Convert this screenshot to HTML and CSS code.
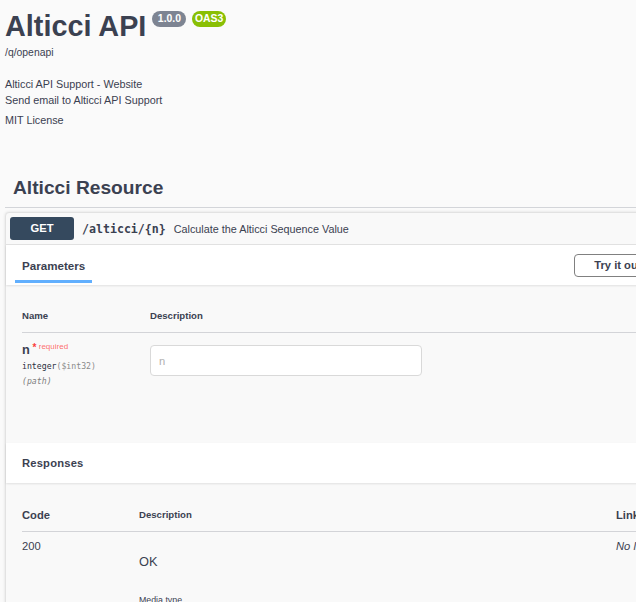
FILE: index.html
```html
<!DOCTYPE html>
<html lang="en">
<head>
<meta charset="utf-8">
<title>Alticci API</title>
<link rel="stylesheet" href="styles.css">
</head>
<body>
<div class="page">
  <div class="info">
    <h1 class="title">Alticci API <span class="badges"><span class="badge ver">1.0.0</span><span class="badge oas">OAS3</span></span></h1>
    <div class="base-url">/q/openapi</div>
    <div class="contact">
      <a class="link">Alticci API Support - Website</a>
      <a class="link">Send email to Alticci API Support</a>
    </div>
    <a class="link license">MIT License</a>
  </div>

  <h3 class="tag">Alticci Resource</h3>

  <div class="opblock">
    <div class="summary">
      <span class="method">GET</span>
      <span class="path">/alticci/{n}</span>
      <span class="summary-desc">Calculate the Alticci Sequence Value</span>
    </div>

    <div class="section-header">
      <div class="tab"><span class="tab-label">Parameters</span></div>
      <button class="try-btn">Try it out</button>
    </div>

    <div class="params">
      <table class="ptable">
        <thead>
          <tr><th class="col-name">Name</th><th class="col-desc">Description</th></tr>
        </thead>
        <tbody>
          <tr>
            <td class="col-name">
              <div class="pname">n<span class="star">&nbsp;*</span><span class="req">&nbsp;required</span></div>
              <div class="ptype">integer<span class="pformat">($int32)</span></div>
              <div class="pin">(path)</div>
            </td>
            <td class="col-desc"><input class="pinput" type="text" placeholder="n"></td>
          </tr>
        </tbody>
      </table>
    </div>

    <div class="section-header">
      <h4 class="sec-title">Responses</h4>
    </div>

    <div class="responses">
      <table class="rtable">
        <thead>
          <tr>
            <th class="rcode rhead-lg">Code</th>
            <th class="rdesc rhead-sm">Description</th>
            <th class="rlinks rhead-lg">Links</th>
          </tr>
        </thead>
        <tbody>
          <tr>
            <td class="rcode">200</td>
            <td class="rdesc">
              <p class="ok">OK</p>
              <div class="media-title">Media type</div>
              <div class="media-select">text/plain</div>
            </td>
            <td class="rlinks"><i>No links</i></td>
          </tr>
        </tbody>
      </table>
    </div>
  </div>
</div>
</body>
</html>
```

FILE: styles.css
```css
html, body {
  margin: 0;
  padding: 0;
  background: #fafafa;
  overflow: hidden;
}
body {
  font-family: "Liberation Sans", Arial, sans-serif;
  color: #3b4151;
}
.page {
  width: 700px;
  padding-left: 5px;
}

/* info */
.title {
  margin: 12px 0 0;
  font-size: 28.8px;
  line-height: 28.8px;
  font-weight: 700;
  display: flex;
  align-items: flex-start;
}
.badges {
  display: flex;
  gap: 6px;
  margin-left: 6px;
}
.badge {
  display: inline-block;
  height: 16px;
  line-height: 16px;
  border-radius: 57px;
  color: #fff;
  font-size: 10.4px;
  font-weight: 700;
  margin-top: -1px;
}
.badge.ver { background: #7d8492; padding: 0 5.5px; }
.badge.oas { background: #89bf04; padding: 0 2.5px; }
.base-url {
  margin-top: 6px;
  font-size: 10.4px;
  line-height: 12px;
}
.contact { margin-top: 17.6px; }
.link {
  display: block;
  font-size: 10.8px;
  line-height: 16px;
  color: #3b4151;
}
.license { margin-top: 4px; }

/* tag */
.tag {
  margin: 48px 0 0;
  padding: 0 0 7px 8px;
  font-size: 19.2px;
  line-height: 24px;
  font-weight: 700;
  border-bottom: 1px solid #d3d5d9;
}

/* operation */
.opblock {
  margin-top: 4px;
  width: 674px;
  box-sizing: border-box;
  border: 1px solid #e2e2e2;
  border-radius: 4px;
  background: #f9f9f9;
  box-shadow: 0 0 3px rgba(0,0,0,.12);
}
.summary {
  display: flex;
  align-items: center;
  padding: 4px;
  border-bottom: 1px solid #e2e2e2;
}
.method {
  width: 64px;
  height: 23px;
  line-height: 23px;
  text-align: center;
  border-radius: 3px;
  background: #35495e;
  color: #fff;
  font-size: 11.2px;
  font-weight: 700;
}
.path {
  margin-left: 8px;
  font-family: "DejaVu Sans Mono", monospace;
  font-weight: 700;
  font-size: 11.6px;
}
.summary-desc {
  margin-left: 8px;
  font-size: 10.8px;
}

.section-header {
  height: 40px;
  box-sizing: border-box;
  padding: 0 16px;
  background: #fff;
  display: flex;
  align-items: center;
  justify-content: space-between;
  box-shadow: 0 1px 2px rgba(0,0,0,.1);
  position: relative;
}
.tab-label {
  position: relative;
  display: inline-block;
  font-size: 11.6px;
  line-height: 14px;
  font-weight: 700;
}
.tab-label::after {
  content: "";
  position: absolute;
  left: -7px;
  right: -7px;
  top: calc(100% + 7px);
  height: 3px;
  background: #61affe;
}
.try-btn {
  height: 23px;
  box-sizing: border-box;
  padding: 0 19.5px;
  border: 1.5px solid #808080;
  border-radius: 4px;
  background: transparent;
  color: #3b4151;
  font-family: "Liberation Sans", Arial, sans-serif;
  font-size: 11.2px;
  font-weight: 700;
}
.sec-title {
  margin: 0;
  font-size: 11.2px;
  line-height: 14px;
  font-weight: 700;
  letter-spacing: 0.2px;
}

/* parameters */
.params {
  height: 158px;
  box-sizing: border-box;
  padding: 16px;
}
.ptable, .rtable {
  width: 640px;
  border-collapse: collapse;
}
.ptable th {
  text-align: left;
  font-size: 9.6px;
  line-height: 12px;
  font-weight: 700;
  padding: 9px 0 10px;
  border-bottom: 1px solid #d3d4d8;
}
.ptable td {
  vertical-align: top;
  padding: 8px 0;
}
.col-name { width: 128px; }
.pname {
  margin-top: -2px;
  font-size: 12.8px;
  line-height: 16px;
  font-weight: 700;
}
.star {
  color: #f93e3e;
  font-size: 10px;
  vertical-align: 3px;
}
.req {
  color: rgba(255,0,0,.6);
  font-size: 8px;
  font-weight: 400;
  vertical-align: 5px;
}
.ptype {
  margin-top: 2px;
  font-family: "DejaVu Sans Mono", monospace;
  font-size: 8.2px;
  line-height: 12px;
  color: #2b3040;
}
.pformat {
  color: #8a8a8a;
}
.pin {
  margin-top: 3px;
  font-family: "DejaVu Sans Mono", monospace;
  font-size: 8.2px;
  line-height: 12px;
  font-style: italic;
  color: #808080;
}
.pinput {
  display: block;
  margin: 4px 0 0;
  width: 272px;
  height: 31px;
  box-sizing: border-box;
  padding: 0 8px;
  border: 1px solid #d9d9d9;
  border-radius: 4px;
  background: #fff;
  font-family: "Liberation Sans", Arial, sans-serif;
  font-size: 11.2px;
  color: #3b4151;
}
.pinput::placeholder { color: #b0b0b0; }

/* responses */
.responses {
  padding: 16px;
}
.rtable th {
  text-align: left;
  padding: 10px 0 10px;
  line-height: 12px;
  border-bottom: 1px solid #d3d4d8;
  font-weight: 700;
}
.rhead-lg { font-size: 11.2px; }
.rhead-sm { font-size: 9.6px; }
.rtable td {
  vertical-align: top;
  padding: 7px 0;
  font-size: 11.2px;
  line-height: 14px;
}
.rcode { width: 117px; }
.rdesc { width: 477px; }
.ok {
  margin: 15px 0 0;
  font-size: 12.8px;
  line-height: 16px;
}
.media-title {
  margin-top: 24px;
  font-size: 8.8px;
  line-height: 12px;
}
.media-select {
  margin-top: 4px;
  width: 120px;
  height: 24px;
  border: 1.5px solid #41444e;
  border-radius: 4px;
  font-size: 10px;
  line-height: 24px;
  padding-left: 8px;
  font-weight: 700;
}
.rlinks i { color: #3b4151; white-space: nowrap; }
```
